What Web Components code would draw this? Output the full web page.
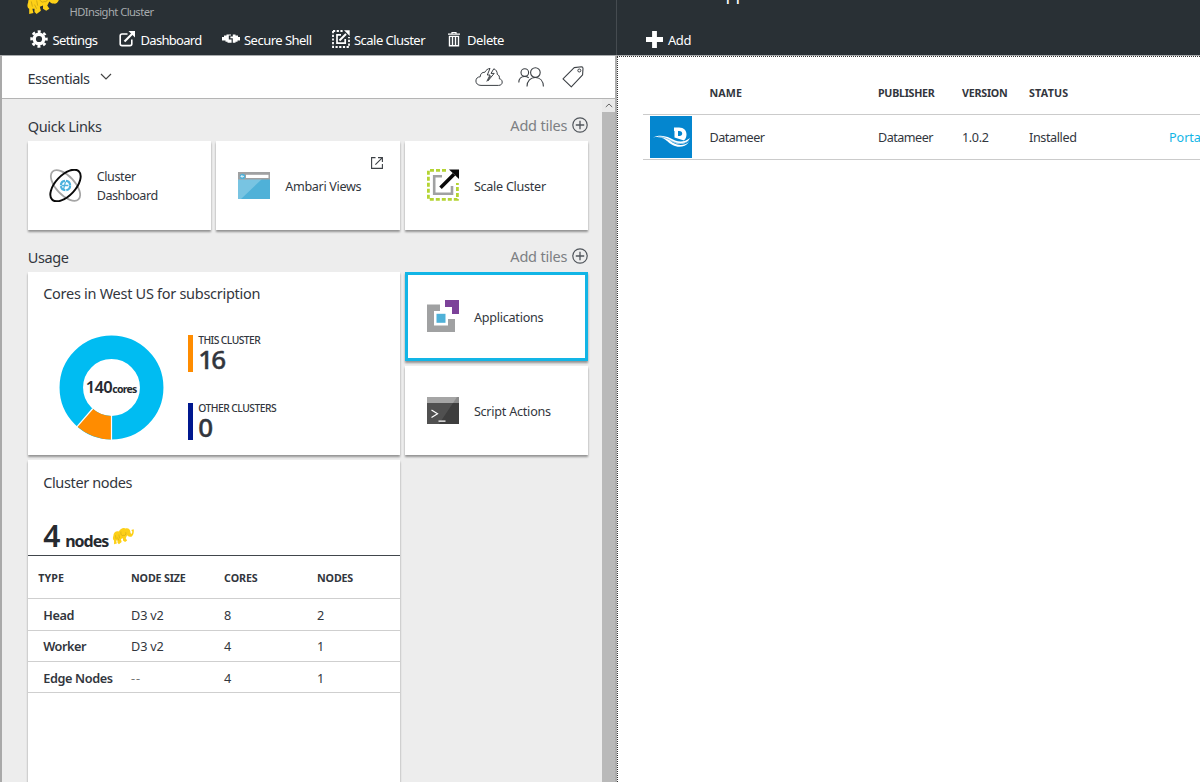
<!DOCTYPE html>
<html lang="en">
<head>
<meta charset="utf-8">
<title>HDInsight Cluster</title>
<style>
html,body{margin:0;height:100%;overflow:hidden;background:#fff}
body{font-family:"Noto Sans","Open Sans",sans-serif;color:#32363d}
</style>
</head>
<body>
<portal-app></portal-app>
<script>
const define = (name, html, after) => {
  const t = document.createElement('template');
  t.innerHTML = html;
  customElements.define(name, class extends HTMLElement {
    connectedCallback() {
      if (this.shadowRoot) return;
      this.attachShadow({mode: 'open'}).append(t.content.cloneNode(true));
      if (after) after(this, this.shadowRoot);
    }
  });
};

/* Single-line label: s = font size, w = advance width, f = weight */
define('fit-text', `<style>
:host{display:block;white-space:nowrap;flex:none;line-height:20px}
span{display:inline-block}
</style><span><slot></slot></span>`, (el, root) => {
  const span = root.querySelector('span');
  const s = el.getAttribute('s'), f = el.getAttribute('f'), w = +el.getAttribute('w');
  if (s) el.style.fontSize = s + 'px';
  if (f) el.style.fontWeight = f;
  if (w) {
    el.style.width = w + 'px';
    const n = el.textContent.length;
    span.style.letterSpacing = ((w - span.getBoundingClientRect().width) / n).toFixed(3) + 'px';
  }
});

const ELEPHANT = `<path fill="#fdd017" d="M2 12C2 7 6 5 10 6C12 2 17 0 20 2C24 1 27 4 27 8C28 10 29.5 9 29.5 6L28 4L31.5 3C32.5 8 30 14 26 13C24 13 23 12 22 11L20 15L22 18L19 20L16 18V15L13 16L14 20L10 23L8 21L8 18L6 18L7 22L3 23L3 18C1 17 1 14 2 12Z"/><path fill="none" stroke="#7d6210" stroke-opacity=".45" stroke-width=".7" d="M13 6C12 10 15 13 17 11C19 12 21 10 20 7M10 10L11 15M5 11L6 16M8 14L10 18"/>`;

const ICONS = {
  gear: ['0 0 18 18', `<g fill="none" stroke="#fff"><circle cx="9" cy="9" r="4.8" stroke-width="3.4"/><circle cx="9" cy="9" r="7.4" stroke-width="2.6" stroke-dasharray="3 2.81" stroke-dashoffset="1.5"/></g>`],
  open: ['0 0 17 17', `<path d="M8.5 4H3Q1.2 4 1.2 6V14Q1.2 15.6 3 15.6H11Q12.8 15.6 12.8 14V9.5" fill="none" stroke="#fff" stroke-width="1.6"/><path d="M5.5 11.5L13.5 3.5" stroke="#fff" stroke-width="2.2"/><path d="M9.5 1H16V7.5Z" fill="#fff"/>`],
  shell: ['0 0 18 12', `<path fill="#fff" d="M0 4H2V2.5H4.5V1.5H9V2.6H6.8V6.4H9.6V9.8H5.5V8.8H3.5V7.5H0ZM8.4 3.6H10.8V1.5H13.5V2.5H16V4H18V7.5H15.5V8.8H13.5V9.8H10.8V5.2H8.4Z"/>`],
  scale: ['0 0 18 18', `<path d="M1 1H11M1 1V17H17V7" fill="none" stroke="#fff" stroke-width="1.8" stroke-dasharray="2.2 1.5"/><path d="M9 4.8H5V13.2H13.2V9" fill="none" stroke="#fff" stroke-width="1.7"/><path d="M7.5 10.5L14 4" stroke="#fff" stroke-width="2"/><path d="M12 .3H17.7V6Z" fill="#fff"/>`],
  trash: ['0 0 12 15', `<path d="M4 1.4V.5H8V1.4M0 2.2H12" fill="none" stroke="#fff" stroke-width="1.2"/><path d="M1.5 4.4V13.8H10.5V4.4ZM4.5 4V14M7.5 4V14" fill="none" stroke="#fff" stroke-width="1.4"/>`],
  plus: ['0 0 17 17', `<path d="M8.5 0V17M0 8.5H17" stroke="#fff" stroke-width="4.8"/>`],
  chevron: ['0 0 12 7', `<path d="M1 1L6 6L11 1" fill="none" stroke="#444" stroke-width="1.2"/>`],
  up: ['0 0 8 5', `<path d="M.8 4L4 1L7.2 4" fill="none" stroke="#666" stroke-width="1"/>`],
  cloud: ['0 0 28 20', `<g fill="none" stroke="#3c4045" stroke-width="1" stroke-linejoin="round"><path d="M13 18.4H6C2.8 18.4 .9 16.4 .9 14C.9 11.4 2.8 9.7 5.2 9.8C5.2 6.8 7.3 5 9.8 5.3C11 3 12.8 1.7 15 1.4L12.3 8H15L11.8 14.5M13 18.4H23.5C26 18.4 27.3 16.9 27.2 15C27.1 13 25.8 11.9 24.3 11.8C24.8 9.4 23.8 8 22.3 7.4C22.3 4.6 21 2.6 18.8 1.8L16 6.4H19.2L13 13.8L15.6 8.7"/></g>`],
  people: ['0 0 26 20', `<g fill="none" stroke="#3c4045" stroke-width="1.1"><circle cx="6.8" cy="5.6" r="3.8"/><circle cx="17.4" cy="5.6" r="4.8"/><path d="M.8 15.5C.9 11.6 3.5 9.5 6.8 9.5C8.4 9.5 9.7 10 10.7 10.8M9 19.4C9.1 13.9 12.6 10.5 17.2 10.5C21.9 10.5 25.2 13.9 25.4 19.4"/></g>`],
  tag: ['0 0 22 22', `<path d="M1 12.8L12.2 1.6L19.5 .8Q21 .8 21 2.4L20.6 8.8L9.3 20.8Z" fill="none" stroke="#3c4045" stroke-width="1.1" stroke-linejoin="round"/><circle cx="17.3" cy="4.5" r="1.5" fill="none" stroke="#3c4045" stroke-width="1"/>`],
  add: ['0 0 16 16', `<circle cx="8" cy="8" r="7.2" fill="none" stroke="#50555b" stroke-width="1.2"/><path d="M8 3.8V12.2M3.8 8H12.2" stroke="#50555b" stroke-width="1.3"/>`],
  atom: ['0 0 34 34', `<g fill="none"><ellipse cx="17" cy="17" rx="19.6" ry="9.6" transform="rotate(47 17 17)" stroke="#a5a5a5" stroke-width="1.8"/><circle cx="17" cy="17" r="4.8" stroke="#4ab1dd" stroke-width="2.2" stroke-dasharray="6.5 1"/><path d="M13 17H20M17 13L15 21" stroke="#4ab1dd" stroke-width="1.3"/><ellipse cx="17" cy="17" rx="20" ry="10.4" transform="rotate(-47 17 17)" stroke="#0a0a0a" stroke-width="2"/></g>`],
  browser: ['0 0 32 27', `<path fill="#4fb1d8" d="M0 0H32V27H0Z"/><path fill="#78c4e2" d="M0 7H24L3 27H0Z"/><path fill="#a0a1a2" d="M0 0H32V7.5H0Z"/><path fill="#fff" d="M8 2.8H30.5V6H8Z"/><circle cx="4.5" cy="4.4" r="2.7" fill="#4fb1d8"/><path d="M6 4.4H3M4.4 3L3 4.4L4.4 5.8" fill="none" stroke="#fff" stroke-width=".8"/>`],
  ext: ['0 0 12 12', `<path d="M4.5 .6H.6V11.4H11.4V7M7 .6H11.4V5M11.2 .8L4.4 7.6" fill="none" stroke="#3c4045" stroke-width="1.1"/>`],
  scaletile: ['0 0 32 32', `<path d="M19 1.4H1.4V30.4H30.4V14" fill="none" stroke="#b4d433" stroke-width="2.8" stroke-dasharray="4 2"/><path d="M15 7.2H7.2V24.8H25V17" fill="none" stroke="#a0a1a2" stroke-width="2.6"/><path d="M13.5 18.7L27 5.2" stroke="#0a0a0a" stroke-width="3.6"/><path d="M22 .4H32V10Z" fill="#0a0a0a"/>`],
  apps: ['0 0 32 32', `<path fill="#a0a1a2" d="M0 4.5H13V11H7V25.5H21V19H28V32H0Z"/><path fill="#4fb1d8" d="M9.5 13.8H18.5V22.8H9.5Z"/><path fill="#7c4199" d="M18 0H32V14H25V7H18Z"/>`],
  script: ['0 0 32 27', `<path fill="#3e3e3e" d="M0 0H32V27H0Z"/><path fill="#505050" d="M0 6H26L12 27H0Z"/><path fill="#8b8b8b" d="M0 0H32V6H0Z"/><path fill="#a5a5a5" d="M0 0H30L26 6H0Z"/><path d="M4.5 13L10.5 16.7L4.5 20.4M11.5 24.2H18.5" fill="none" stroke="#fff" stroke-width="1.2"/>`],
  elephant: ['0 0 32 24', ELEPHANT],
  datameer: ['0 0 42 42', `<path fill="#0486cf" d="M0 0H42V42H0Z"/><path fill="#fff" fill-rule="evenodd" d="M24 11.5H29C34 11.5 36.5 14.5 36.5 18.5C36.5 21 35.5 23 34 24.5L24.5 21.5V15H24ZM28 15V20H29.5C31.3 20 32.2 19.2 32.2 17.6C32.2 15.9 31.2 15 29.3 15Z"/><path fill="#fff" d="M3 21.5C9 18.5 15 19.8 20 22C26 25.5 33 27.5 40 22C37 28 30 29.5 24 26.5C17 23 11 19.8 3 21.5ZM12 22C17 22 20 25 24 27.3C29 30 35 29.5 39 26C35 31.5 28 32 22.5 29C18 26.5 17 24 12 22Z"/><path d="M8 20.8C15 20.5 20 24.5 25 26.5C30 28.5 36 27.5 39 24.5" fill="none" stroke="#6db8e3" stroke-width=".8"/>`]
};
define('ui-icon', `<style>:host{display:block;flex:none}svg{display:block;width:100%;height:100%}</style><svg aria-hidden="true"></svg>`, (el, root) => {
  const [box, body] = ICONS[el.getAttribute('name')];
  const svg = root.querySelector('svg');
  svg.setAttribute('viewBox', box);
  svg.setAttribute('preserveAspectRatio', 'none');
  svg.innerHTML = body;
  el.style.width = el.getAttribute('w') + 'px';
  el.style.height = el.getAttribute('h') + 'px';
});

define('blade-header', `<style>
:host{display:flex;flex-direction:column;height:55px;background:#293035;color:#fff;overflow:hidden;box-sizing:border-box;flex:none}
.title{height:24.5px;display:flex;align-items:flex-start}
.bar{height:30px;display:flex;align-items:center}
</style><div class="title"><slot name="title"></slot></div><div class="bar"><slot></slot></div>`);

define('tool-button', `<style>:host{display:flex;align-items:center;height:30px;flex:none;box-sizing:border-box}
::slotted(ui-icon){margin-top:-1px}</style><slot name="icon"></slot><slot></slot>`);

define('section-head', `<style>
:host{display:flex;align-items:center;height:24px;padding:0 1.5px 0 0}
.add{margin-left:auto;display:flex;align-items:center;color:#7c7f83;gap:5px;margin-top:-2.5px}
</style><slot></slot><div class="add"><fit-text s="14.5" w="57">Add tiles</fit-text><ui-icon name="add" w="16" h="16"></ui-icon></div>`);

define('ui-tile', `<style>
:host{display:block;background:#fff;box-shadow:0 1.5px 2px rgba(0,0,0,.38);box-sizing:border-box;position:relative;min-width:0}
:host([link]){display:flex;align-items:center;padding:0 0 0 22px}
:host([selected]){border:3px solid #12b5e6;padding-left:19px}
::slotted(.label){margin-left:15px;margin-top:3px}
::slotted(.corner){position:absolute;right:17px;top:16px}
</style><slot></slot>`);

define('usage-chart', `<style>
:host{display:block;height:184px}
.head{padding:11px 0 0 15.5px}
.body{display:flex;padding:32px 0 0 31px}
.donut{display:grid;width:105px;height:105px;place-items:center}
.donut>*{grid-area:1/1}
.mid{display:flex;align-items:baseline;color:#262a30;padding-top:1.5px}
.legend{margin-left:24px;display:flex;flex-direction:column;gap:31px}
.item{display:flex;height:37px}
.item i{width:5px;margin-right:5.5px}
.item fit-text:first-child{line-height:11px}
.item .big{line-height:26.5px;-webkit-text-stroke:.4px #32363d}
</style>
<div class="head"><fit-text s="14.5" w="217">Cores in West US for subscription</fit-text></div>
<div class="body">
<div class="donut"><svg width="105" height="105" viewBox="0 0 105 105"><g fill="none" stroke-width="23.5"><circle cx="52.5" cy="52.5" r="40.2" stroke="#00bcf2"/><path d="M52.5 92.7A40.2 40.2 0 0 1 26 82.7" stroke="#ff8c00"/></g><path d="M52.5 80V105.5M33.8 73.5L17 92.8" stroke="#fff" stroke-width="1.2"/></svg>
<div class="mid"><fit-text s="16.5" f="600" w="26.5">140</fit-text><fit-text s="10.5" f="700" w="24.5">cores</fit-text></div></div>
<div class="legend">
<div class="item"><i style="background:#ff8c00"></i><div><fit-text s="10.3" f="500" w="62">THIS CLUSTER</fit-text><fit-text class="big" s="26" f="500" w="26">16</fit-text></div></div>
<div class="item"><i style="background:#00188f"></i><div><fit-text s="10.3" f="500" w="78">OTHER CLUSTERS</fit-text><fit-text class="big" s="26" f="500" w="16">0</fit-text></div></div>
</div></div>`);

define('nodes-table', `<style>
:host{display:block}
.head{padding:11.5px 0 0 15.5px}
.sum{display:flex;height:63.5px;padding-left:15.5px;box-sizing:border-box;align-items:baseline;padding-top:24px}
.sum fit-text{line-height:40px;color:#262a30}
.sum ui-icon{margin-left:4px;align-self:flex-start;margin-top:11px}
.r{display:grid;grid-template-columns:103.4px 93px 93px 1fr;align-items:center;height:31.4px;box-sizing:border-box;border-bottom:1px solid #cfcfcf}
.r fit-text{margin-top:1px}
.r>:first-child{padding-left:15.5px}
.th{height:43.8px;border-top:1px solid #41464c}
.th>:first-child{padding-left:10.5px}
</style>
<div class="head"><fit-text s="14.5" w="89">Cluster nodes</fit-text></div>
<div class="sum"><fit-text s="30" f="600" w="22">4</fit-text><fit-text s="16" f="700" w="43">nodes</fit-text><ui-icon name="elephant" w="22" h="18"></ui-icon></div>
<div class="r th"><fit-text s="10.7" f="700" w="26">TYPE</fit-text><fit-text s="10.7" f="700" w="54.5">NODE SIZE</fit-text><fit-text s="10.7" f="700" w="33.5">CORES</fit-text><fit-text s="10.7" f="700" w="36">NODES</fit-text></div>
<div class="r"><fit-text s="12.7" f="600" w="31">Head</fit-text><fit-text s="12.7" w="32.5">D3 v2</fit-text><fit-text s="12.7">8</fit-text><fit-text s="12.7">2</fit-text></div>
<div class="r"><fit-text s="12.7" f="600" w="43">Worker</fit-text><fit-text s="12.7" w="32.5">D3 v2</fit-text><fit-text s="12.7">4</fit-text><fit-text s="12.7">1</fit-text></div>
<div class="r"><fit-text s="12.7" f="600" w="69.5">Edge Nodes</fit-text><fit-text s="12.7" w="10" style="color:#777">--</fit-text><fit-text s="12.7">4</fit-text><fit-text s="12.7">1</fit-text></div>`);

define('cluster-blade', `<style>
:host{display:flex;flex-direction:column;width:617px;height:782px;box-sizing:border-box;flex:none;background:#fff}
blade-header{border-right:1px solid #454b50}
.body{flex:1;min-height:0;display:flex;flex-direction:column;border-left:2px solid #a9a9a9;border-right:2px solid #adadad;border-top:1px solid #a9acae}
.ess{height:42px;flex:none;display:flex;align-items:center;padding:0 31px 0 25.5px;border-bottom:1px solid #b4b4b4}
.ess .icons{margin-left:auto;display:flex;align-items:center}
.main{flex:1;min-height:0;display:flex;background:#ededed}
.content{flex:1;min-height:0;overflow:hidden;padding:15px 12.2px 0 25.7px}
.links{display:grid;grid-template-columns:repeat(3,183.6px);grid-auto-rows:89.2px;gap:5px;margin-top:2.6px}
.usage{display:grid;grid-template-columns:372.2px 183.6px;grid-template-rows:89.4px 89.4px 340px;gap:5px;margin-top:2.4px}
.wide{grid-row:1/3}
.scroll{width:13px;background:#b9b9b9;flex:none}
.scroll div{height:13px;background:#e9e9e9;display:grid;place-items:center}
.logo{margin:-10px 0 0 26px}
</style>
<blade-header>
<ui-icon slot="title" class="logo" name="elephant" w="34" h="25"></ui-icon>
<fit-text slot="title" s="11.2" w="84" style="margin:2px 0 0 9.5px;color:#a7abae">HDInsight Cluster</fit-text>
<tool-button style="padding-left:30px"><ui-icon slot="icon" name="gear" w="18" h="18"></ui-icon><fit-text s="13" w="45" style="margin-left:4.5px">Settings</fit-text></tool-button>
<tool-button style="padding-left:21px"><ui-icon slot="icon" name="open" w="17" h="17" style="margin-top:-2px"></ui-icon><fit-text s="13" w="61" style="margin-left:5px">Dashboard</fit-text></tool-button>
<tool-button style="padding-left:20.5px"><ui-icon slot="icon" name="shell" w="18" h="12"></ui-icon><fit-text s="13" w="67.5" style="margin-left:4px">Secure Shell</fit-text></tool-button>
<tool-button style="padding-left:20.5px"><ui-icon slot="icon" name="scale" w="18" h="18"></ui-icon><fit-text s="13" w="71" style="margin-left:4px">Scale Cluster</fit-text></tool-button>
<tool-button style="padding-left:23px"><ui-icon slot="icon" name="trash" w="12" h="15"></ui-icon><fit-text s="13" w="37" style="margin-left:7px">Delete</fit-text></tool-button>
</blade-header>
<div class="body">
<div class="ess"><fit-text s="14.5" w="62" style="margin-top:1px">Essentials</fit-text><ui-icon name="chevron" w="12" h="7" style="margin:-1px 0 0 10.5px"></ui-icon>
<div class="icons"><ui-icon name="cloud" w="28" h="20"></ui-icon><ui-icon name="people" w="26" h="20" style="margin-left:15px"></ui-icon><ui-icon name="tag" w="22" h="22" style="margin-left:18px"></ui-icon></div></div>
<div class="main"><div class="content">
<section-head><fit-text s="14.5" w="74">Quick Links</fit-text></section-head>
<div class="links">
<ui-tile link><ui-icon name="atom" w="33" h="33" style="margin-left:-.7px"></ui-icon><div class="label" style="margin:2px 0 0 14.7px"><fit-text s="12.6" w="39" style="line-height:19px">Cluster</fit-text><fit-text s="12.6" w="61" style="line-height:19px">Dashboard</fit-text></div></ui-tile>
<ui-tile link><ui-icon name="browser" w="32" h="27"></ui-icon><fit-text class="label" s="12.6" w="76">Ambari Views</fit-text><ui-icon class="corner" name="ext" w="12" h="12"></ui-icon></ui-tile>
<ui-tile link><ui-icon name="scaletile" w="32" h="32"></ui-icon><fit-text class="label" s="12.6" w="72">Scale Cluster</fit-text></ui-tile>
</div>
<section-head style="margin-top:15.5px"><fit-text s="14.5" w="41">Usage</fit-text></section-head>
<div class="usage">
<ui-tile class="wide"><usage-chart></usage-chart></ui-tile>
<ui-tile link selected><ui-icon name="apps" w="32" h="32"></ui-icon><fit-text class="label" s="12.6" w="69.5">Applications</fit-text></ui-tile>
<ui-tile link><ui-icon name="script" w="32" h="27"></ui-icon><fit-text class="label" s="12.6" w="77">Script Actions</fit-text></ui-tile>
<ui-tile><nodes-table></nodes-table></ui-tile>
</div>
</div><div class="scroll"><div><ui-icon name="up" w="8" h="5"></ui-icon></div></div></div>
</div>`);

define('apps-blade', `<style>
:host{display:flex;flex-direction:column;flex:1;min-width:0;overflow:hidden;height:782px;background:#fff}
.body{flex:1;border-top:1px solid #a9acae;box-sizing:border-box}
.in{height:100%;box-sizing:border-box;border-left:1.5px dotted #333;border-top:1.5px dotted #333;padding:15px 0 0 25px}
.r{display:grid;grid-template-columns:66.5px 168.5px 84px 67px 140px 1fr;height:45px;align-items:center;box-sizing:border-box;border-bottom:1px solid #cbcbcb}
.r:not(.th) fit-text{margin-top:2px}
.th{height:43px}
.r ui-icon{margin-left:7px}
.title{margin:-19px 0 0 29px}
</style>
<blade-header><fit-text slot="title" class="title" s="18" w="107.5" style="line-height:24px">Installed Apps</fit-text>
<tool-button style="padding-left:29px"><ui-icon slot="icon" name="plus" w="17" h="17"></ui-icon><fit-text s="13" w="23" style="margin-left:5px">Add</fit-text></tool-button></blade-header>
<div class="body"><div class="in">
<div class="r th"><span></span><fit-text s="10.7" f="700" w="32.5">NAME</fit-text><fit-text s="10.7" f="700" w="56.5">PUBLISHER</fit-text><fit-text s="10.7" f="700" w="45.5">VERSION</fit-text><fit-text s="10.7" f="700" w="39.5">STATUS</fit-text><span></span></div>
<div class="r"><ui-icon name="datameer" w="42" h="42"></ui-icon><fit-text s="12.6" w="55">Datameer</fit-text><fit-text s="12.6" w="55">Datameer</fit-text><fit-text s="12.6" w="26.5">1.0.2</fit-text><fit-text s="12.6" w="47.5">Installed</fit-text><fit-text s="12.6" w="35" style="color:#12b5e6">Portal</fit-text></div>
</div></div>`);

define('portal-app', `<style>:host{display:flex;width:1200px;height:782px;overflow:hidden}</style><cluster-blade></cluster-blade><apps-blade></apps-blade>`);
</script>
</body>
</html>
